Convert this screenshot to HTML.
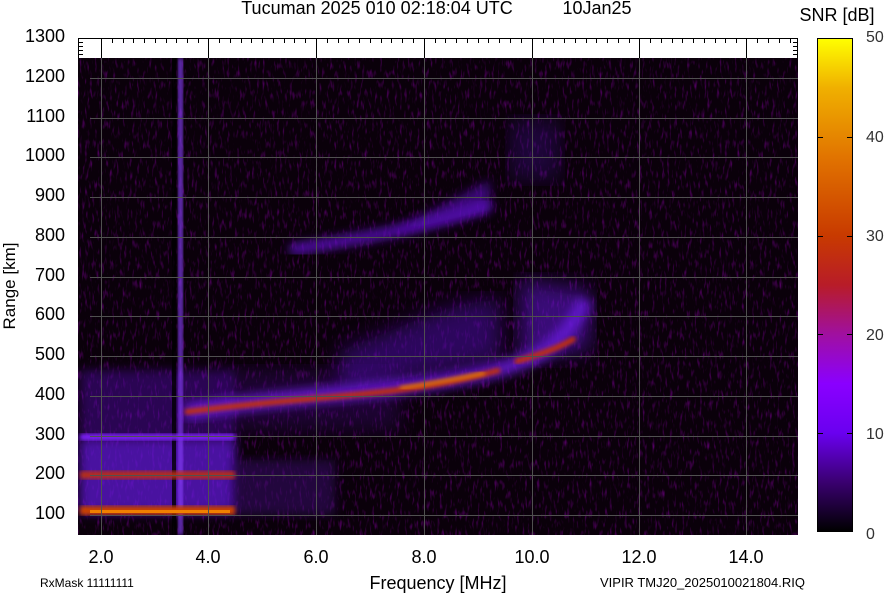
<!DOCTYPE html>
<html><head><meta charset="utf-8"><style>
html,body{margin:0;padding:0;background:#fff;}
svg{display:block;font-family:"Liberation Sans",sans-serif;}
</style></head><body>
<svg width="884" height="595" viewBox="0 0 884 595" xmlns="http://www.w3.org/2000/svg">
<defs>
<linearGradient id="cb" x1="0" y1="1" x2="0" y2="0">
<stop offset="0" stop-color="#000000"/>
<stop offset="0.1" stop-color="#3a0070"/>
<stop offset="0.2" stop-color="#6a00f0"/>
<stop offset="0.3" stop-color="#8a00ff"/>
<stop offset="0.4" stop-color="#a010a0"/>
<stop offset="0.5" stop-color="#b81c28"/>
<stop offset="0.6" stop-color="#c83a00"/>
<stop offset="0.75" stop-color="#e07000"/>
<stop offset="0.9" stop-color="#f0b000"/>
<stop offset="1" stop-color="#ffff00"/>
</linearGradient>
<filter id="noise" x="0" y="0" width="100%" height="100%">
<feTurbulence type="fractalNoise" baseFrequency="0.4 0.1" numOctaves="2" seed="3"/>
<feColorMatrix type="matrix" values="0 0 0 0 0.4  0 0 0 0 0  0 0 0 0 0.6  0 0 0 2.4 -1.3"/>
</filter>
<filter id="b2"><feGaussianBlur stdDeviation="2"/></filter>
<filter id="b5"><feGaussianBlur stdDeviation="5"/></filter>
<filter id="b10"><feGaussianBlur stdDeviation="10"/></filter>
<clipPath id="pc"><rect x="78" y="58" width="720" height="477"/></clipPath>
</defs>

<text x="377" y="14" font-size="18" text-anchor="middle">Tucuman 2025 010 02:18:04 UTC</text>
<text x="597" y="14" font-size="18" text-anchor="middle">10Jan25</text>
<text x="837" y="21" font-size="18" text-anchor="middle">SNR [dB]</text>

<rect x="78" y="38" width="720" height="20" fill="#fff"/>
<rect x="78" y="58" width="720" height="477" fill="#0a000a"/>
<g clip-path="url(#pc)">
<rect x="78" y="58" width="720" height="477" filter="url(#noise)" opacity="0.5"/>
<rect x="80" y="370" width="155" height="145" fill="#5a10c0" opacity="0.4" filter="url(#b5)"/>
<rect x="80" y="440" width="155" height="72" fill="#7020ff" opacity="0.45" filter="url(#b5)"/>
<rect x="235" y="460" width="100" height="55" fill="#3a0a70" opacity="0.5" filter="url(#b5)"/>
<rect x="230" y="370" width="170" height="60" fill="#4a0a90" opacity="0.3" filter="url(#b10)"/>
<rect x="172" y="58" width="4" height="477" fill="#000" opacity="0.8"/>
<rect x="178" y="58" width="5" height="477" fill="#8a40ff" opacity="0.8" filter="url(#b2)"/>
<rect x="80" y="506" width="155" height="9" fill="#c84000" filter="url(#b2)"/>
<rect x="90" y="510" width="140" height="3" fill="#f08000"/>
<rect x="80" y="471" width="155" height="8" fill="#c03010" filter="url(#b2)" opacity="0.9"/>
<rect x="80" y="434" width="155" height="6" fill="#8020ff" filter="url(#b2)"/>
<path d="M185 412 C260 400 330 395 390 388 C440 382 480 375 510 366 C540 355 565 345 585 300" stroke="#7a20ff" stroke-width="16" fill="none" opacity="0.7" filter="url(#b5)"/>
<path d="M340 350 C400 330 450 300 500 300 L500 360 L340 390 Z" fill="#5010b0" opacity="0.5" filter="url(#b10)"/>
<path d="M520 280 L590 290 L590 350 L520 360 Z" fill="#6018d0" opacity="0.55" filter="url(#b10)"/>
<path d="M185 412 C260 402 330 398 390 391 C440 385 470 378 500 370" stroke="#c83000" stroke-width="5" fill="none" filter="url(#b2)"/>
<path d="M400 388 C430 384 460 378 485 373" stroke="#f08a00" stroke-width="3" fill="none" filter="url(#b2)"/>
<path d="M515 362 C540 354 560 348 575 338" stroke="#c83000" stroke-width="5" fill="none" filter="url(#b2)"/>
<path d="M290 250 C350 240 420 230 490 205" stroke="#6a18e0" stroke-width="10" fill="none" opacity="0.8" filter="url(#b5)"/>
<path d="M395 230 L490 180 L490 210 L395 232 Z" fill="#5a10c0" opacity="0.6" filter="url(#b5)"/>
<path d="M510 120 L560 120 L560 180 L510 180 Z" fill="#3a0a80" opacity="0.4" filter="url(#b10)"/>
</g>
<g stroke="#505050" stroke-width="1">
<line x1="90" y1="78.5" x2="798" y2="78.5"/><line x1="90" y1="118.5" x2="798" y2="118.5"/>
<line x1="90" y1="157.5" x2="798" y2="157.5"/><line x1="90" y1="197.5" x2="798" y2="197.5"/>
<line x1="90" y1="237.5" x2="798" y2="237.5"/><line x1="90" y1="277.5" x2="798" y2="277.5"/>
<line x1="90" y1="316.5" x2="798" y2="316.5"/><line x1="90" y1="356.5" x2="798" y2="356.5"/>
<line x1="90" y1="396.5" x2="798" y2="396.5"/><line x1="90" y1="436.5" x2="798" y2="436.5"/>
<line x1="90" y1="475.5" x2="798" y2="475.5"/><line x1="90" y1="515.5" x2="798" y2="515.5"/>
<line x1="101.5" y1="58" x2="101.5" y2="535"/><line x1="208.5" y1="58" x2="208.5" y2="535"/>
<line x1="316.5" y1="58" x2="316.5" y2="535"/><line x1="424.5" y1="58" x2="424.5" y2="535"/>
<line x1="532.5" y1="58" x2="532.5" y2="535"/><line x1="639.5" y1="58" x2="639.5" y2="535"/>
<line x1="746.5" y1="58" x2="746.5" y2="535"/>
</g>
<g stroke="#000" stroke-width="1">
<line x1="78" y1="38.5" x2="798" y2="38.5"/>
<line x1="78.5" y1="38" x2="78.5" y2="58"/><line x1="797.5" y1="38" x2="797.5" y2="58"/>
<line x1="101.5" y1="38" x2="101.5" y2="58"/><line x1="208.5" y1="38" x2="208.5" y2="58"/>
<line x1="316.5" y1="38" x2="316.5" y2="58"/><line x1="424.5" y1="38" x2="424.5" y2="58"/>
<line x1="532.5" y1="38" x2="532.5" y2="58"/><line x1="639.5" y1="38" x2="639.5" y2="58"/>
<line x1="746.5" y1="38" x2="746.5" y2="58"/>
<path d="M112.5 38v5M123.5 38v5M133.5 38v5M144.5 38v5M155.5 38v5M166.5 38v5M176.5 38v5M187.5 38v5M198.5 38v5M219.5 38v5M230.5 38v5M241.5 38v5M251.5 38v5M262.5 38v5M273.5 38v5M284.5 38v5M294.5 38v5M305.5 38v5M327.5 38v5M338.5 38v5M348.5 38v5M359.5 38v5M370.5 38v5M381.5 38v5M391.5 38v5M402.5 38v5M413.5 38v5M435.5 38v5M445.5 38v5M456.5 38v5M467.5 38v5M478.5 38v5M488.5 38v5M499.5 38v5M510.5 38v5M521.5 38v5M543.5 38v5M553.5 38v5M564.5 38v5M575.5 38v5M586.5 38v5M596.5 38v5M607.5 38v5M618.5 38v5M629.5 38v5M650.5 38v5M661.5 38v5M672.5 38v5M682.5 38v5M693.5 38v5M704.5 38v5M715.5 38v5M725.5 38v5M736.5 38v5M757.5 38v5M768.5 38v5M779.5 38v5M790.5 38v5"/>
<path d="M78 42.5h5M78 46.5h5M78 50.5h5M78 54.5h5M793 42.5h5M793 46.5h5M793 50.5h5M793 54.5h5"/>
</g>
<g font-size="18" text-anchor="end">
<text x="65" y="42">1300</text><text x="65" y="82">1200</text><text x="65" y="122">1100</text>
<text x="65" y="161">1000</text><text x="65" y="201">900</text><text x="65" y="241">800</text>
<text x="65" y="281">700</text><text x="65" y="320">600</text><text x="65" y="360">500</text>
<text x="65" y="400">400</text><text x="65" y="440">300</text><text x="65" y="479">200</text>
<text x="65" y="519">100</text>
</g>
<text transform="translate(15 286) rotate(-90)" font-size="17" text-anchor="middle">Range [km]</text>
<g font-size="18" text-anchor="middle">
<text x="101" y="563">2.0</text><text x="208" y="563">4.0</text><text x="316" y="563">6.0</text>
<text x="424" y="563">8.0</text><text x="532" y="563">10.0</text><text x="639" y="563">12.0</text>
<text x="746" y="563">14.0</text>
</g>
<text x="438" y="589" font-size="18" text-anchor="middle">Frequency [MHz]</text>
<text x="40" y="587" font-size="12">RxMask 11111111</text>
<text x="805" y="587" font-size="13" text-anchor="end">VIPIR  TMJ20_2025010021804.RIQ</text>
<rect x="817.5" y="38.5" width="35" height="493" fill="url(#cb)" stroke="#000"/>
<g stroke="#000"><path d="M817 137.5h6M847 137.5h6M817 236.5h6M847 236.5h6M817 334.5h6M847 334.5h6M817 433.5h6M847 433.5h6"/></g>
<g font-size="16" fill="#333">
<text x="866" y="42">50</text><text x="866" y="142">40</text><text x="866" y="241">30</text>
<text x="866" y="340">20</text><text x="866" y="439">10</text><text x="866" y="539">0</text>
</g>
</svg>
</body></html>
